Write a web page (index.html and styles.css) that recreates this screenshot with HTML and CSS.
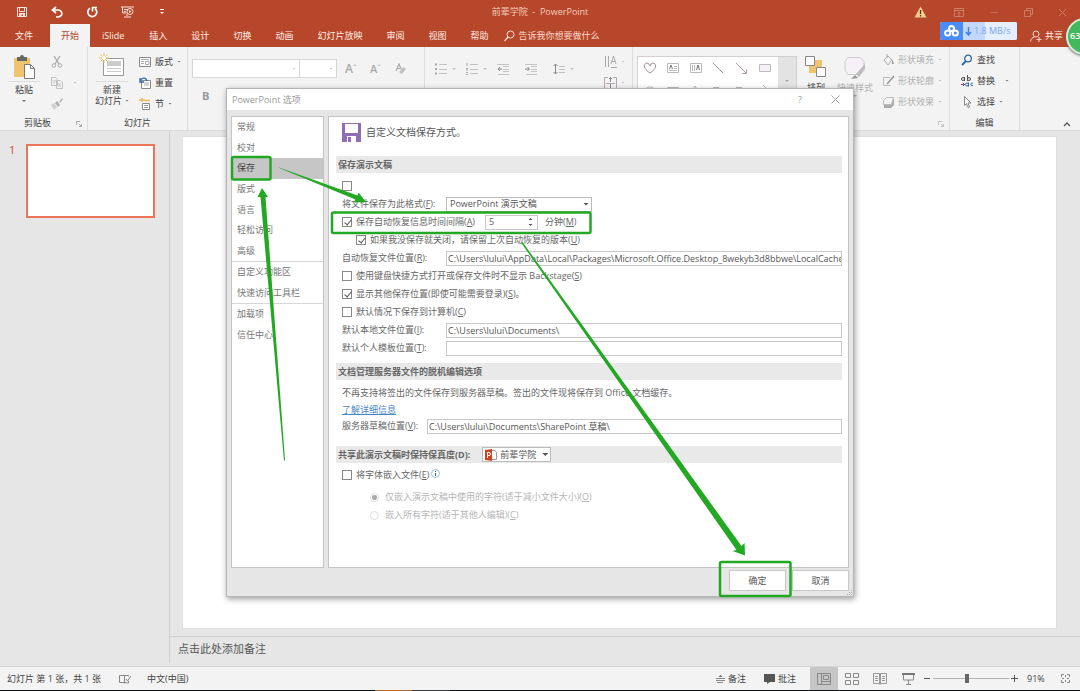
FILE: index.html
```html
<!DOCTYPE html>
<html lang="zh-CN">
<head>
<meta charset="utf-8">
<title>前辈学院 - PowerPoint</title>
<link rel="stylesheet" href="styles.css">
</head>
<body>
<div class="app">
  <header class="titlebar">
    <div class="quick">
      <button class="tool" aria-label="保存"><svg width="12" height="12" viewBox="0 0 12 12"><path d="M1.500 1.500h9v9h-9z M3.500 1.500v4h5v-4" fill="none" stroke="#fbe3da"/><path d="M3 7h6v4H7V8.500H5.500V11H3z" fill="#fbe3da"/></svg></button>
      <button class="tool" aria-label="撤消"><svg width="12" height="12" viewBox="0 0 12 12"><path d="M5 1L1.500 4L5 7 M2 4h5a3.300 3 0 0 1 0 7H5" fill="none" stroke="#fff" stroke-width="1.700"/></svg></button>
      <button class="tool" aria-label="重复"><svg width="12" height="12" viewBox="0 0 12 12"><path d="M9 2.500A4.500 4.500 0 1 1 4 2.200 M6.500 5.500V1.500H11" fill="none" stroke="#fff" stroke-width="1.700"/></svg></button>
      <button class="tool" aria-label="从头开始放映"><svg width="13" height="12" viewBox="0 0 13 12"><path d="M0 1h13 M1.500 1v6h4 M3 3.500h4 M3 5.500h2 M6 8v2 M3 11h7" fill="none" stroke="#fbe3da"/><circle cx="9" cy="5.500" r="3" fill="none" stroke="#fbe3da"/><path d="M8 4l2.500 1.500L8 7z" fill="#fbe3da"/></svg></button>
      <button class="tool" aria-label="自定义快速访问工具栏"><svg width="6" height="6" viewBox="0 0 6 6"><path d="M1 .5h4" stroke="#fff"/><path d="M1 3h4L3 5z" fill="#fff"/></svg></button>
    </div>
    <h1 class="doc-title">前辈学院 &nbsp;- &nbsp;PowerPoint</h1>
    <div class="window-tools">
      <svg width="13" height="12" viewBox="0 0 13 12"><path d="M6.500 0.500L12.500 11.500H.5z" fill="#f3cf92"/><path d="M6.500 4v4M6.500 9v1.500" stroke="#5b3418" stroke-width="1.300"/></svg>
      <button class="tool" aria-label="功能区显示选项"><svg width="10" height="9" viewBox="0 0 10 9"><path d="M.5.500h9v8h-9z M.5 2.500h9 M5 8V4 M3.500 5.500L5 4l1.500 1.500" fill="none" stroke="#cf7c66"/></svg></button>
      <button class="tool" aria-label="最小化"><svg width="10" height="9" viewBox="0 0 10 9"><path d="M1 4.500h8" stroke="#c96b52"/></svg></button>
      <button class="tool" aria-label="还原"><svg width="9" height="9" viewBox="0 0 9 9"><path d="M.5 2.500h6v6h-6z M2.500 2.500v-2h6v6h-2" fill="none" stroke="#cf7c66"/></svg></button>
      <button class="tool" aria-label="关闭"><svg width="9" height="9" viewBox="0 0 9 9"><path d="M1 1l7 7M8 1L1 8" stroke="#cf7c66"/></svg></button>
    </div>
  </header>

  <nav class="tabs">
    <a class="tab compact file" href="#">文件</a>
    <a class="tab compact active" href="#">开始</a>
    <a class="tab compact addin" href="#">iSlide</a>
    <a class="tab" href="#">插入</a>
    <a class="tab" href="#">设计</a>
    <a class="tab" href="#">切换</a>
    <a class="tab" href="#">动画</a>
    <a class="tab" href="#">幻灯片放映</a>
    <a class="tab" href="#">审阅</a>
    <a class="tab" href="#">视图</a>
    <a class="tab" href="#">帮助</a>
    <button class="tell-me"><svg width="11" height="12" viewBox="0 0 11 12"><circle cx="6.500" cy="4.500" r="3.500" fill="none" stroke="#fbe3da"/><path d="M4 7L.5 11" stroke="#fbe3da" stroke-width="1.200"/></svg>告诉我你想要做什么</button>
    <button class="share"><svg width="12" height="12" viewBox="0 0 12 12"><circle cx="6" cy="4" r="3" fill="none" stroke="#f6d5ca"/><path d="M.5 11.500c.5-3 2-4 4-4.500M9 7v5M6.500 9.500h5" fill="none" stroke="#f6d5ca"/></svg>共享</button>
  </nav>

  <div class="ribbon">
    <section class="group clipboard">
      <div class="group-body">
        <button class="big"><svg width="22" height="24" viewBox="0 0 22 24"><path d="M1 3h16v19H1z" fill="#efc36f"/><path d="M4 2h3a2 2 0 0 1 4 0h3v4H4z" fill="#666"/><path d="M11.500 9.500h6l4 4v10h-10z" fill="#fff" stroke="#777"/><path d="M17.500 9.500v4h4" fill="none" stroke="#777"/></svg><span class="rule"></span><span>粘贴</span><i class="caret below"></i></button>
        <div class="stack">
          <button class="row dim" aria-label="剪切"><svg width="12" height="12" viewBox="0 0 12 12"><path d="M3 0l5 8M9 0L4 8" stroke="#aaa" stroke-width="1.300"/><circle cx="3" cy="9.500" r="1.800" fill="none" stroke="#aaa"/><circle cx="9" cy="9.500" r="1.800" fill="none" stroke="#aaa"/></svg></button>
          <button class="row dim" aria-label="复制"><svg width="12" height="12" viewBox="0 0 12 12"><path d="M.5.500h4l2 2v6h-6z M5.500 3.500h4l2 2v6h-6z" fill="#f3f3f3" stroke="#c0c0c0"/><path d="M2 4h3M2 6h2M7 7h3M7 9h3" stroke="#c0c0c0"/></svg><i class="caret far"></i></button>
          <button class="row dim" aria-label="格式刷"><svg width="12" height="12" viewBox="0 0 12 12"><path d="M0 7l3-2 3 4-3 3z" fill="#cfcfcf"/><path d="M4 5l2-2 3 4-2 2z M8 4l3-4 1 1-3 4z" fill="#b0b0b0"/></svg></button>
        </div>
      </div>
      <h2 class="group-name">剪贴板</h2><svg class="launcher" width="6" height="6" viewBox="0 0 6 6"><path d="M.5 4V.5H4M3 3l2.500 2.500M5.500 3v2.500H3" fill="none" stroke="#aaa"/></svg>
    </section>
    <section class="group slides">
      <div class="group-body">
        <button class="big"><svg class="new-slide" width="26" height="24" viewBox="0 0 26 24"><path d="M4.500 5.500h20v17h-20z" fill="#fff" stroke="#999"/><path d="M8 8h14v5H8z" fill="#ccc"/><path d="M8 15.500h14M8 18.500h14" stroke="#ccc"/><path d="M5 0v10M0 5h10M1.500 1.500l7 7M8.500 1.500l-7 7" stroke="#efb85c"/><circle cx="5" cy="5" r="2" fill="#fff"/></svg><span class="rule"></span><span>新建</span><span class="with-caret">幻灯片<i class="caret"></i></span></button>
        <div class="stack">
          <button class="row"><svg width="12" height="12" viewBox="0 0 12 12"><path d="M.5 1.500h11v9H.5z" fill="#fff" stroke="#888"/><path d="M2 3.500h8M2 5.500h3M2 7.500h3M6.500 5.500H10v3H6.500z" fill="none" stroke="#aaa"/></svg>版式<i class="caret"></i></button>
          <button class="row"><svg width="12" height="12" viewBox="0 0 12 12"><path d="M2.500 3.500h9v8h-9z" fill="#fff" stroke="#888"/><path d="M5 6h5M5 8h5" stroke="#aaa"/><path d="M1 1v4h4M1 5c1-5 6-5 7-1" fill="none" stroke="#2b6cb0" stroke-width="1.300"/></svg>重置</button>
          <button class="row"><svg width="12" height="12" viewBox="0 0 12 12"><path d="M0 2h6M3 0v4M6 2.500h5" stroke="#efb85c" stroke-width="1.500"/><path d="M3.500 5.500h7v6h-7z" fill="#fff" stroke="#888"/><path d="M5 7.500h4M5 9.500h4" stroke="#999"/></svg>节<i class="caret"></i></button>
        </div>
      </div>
      <h2 class="group-name">幻灯片</h2>
    </section>
    <section class="group font">
      <div class="font-row">
        <div class="combo-pair"><span class="combo wide"><i class="caret"></i></span><span class="combo"><i class="caret"></i></span></div>
        <button class="glyph" aria-label="增大字号"><b>A</b><sup>ˆ</sup></button>
        <button class="glyph small" aria-label="减小字号"><b>A</b><sup>ˇ</sup></button>
        <button class="glyph" aria-label="清除格式"><svg width="12" height="12" viewBox="0 0 12 12"><path d="M1 8l3-7 2 5M2 5.500h3" fill="none" stroke="#aaa" stroke-width="1.200"/><path d="M4 9l4-5 3 2-4 5z" fill="#c0c0c0"/></svg></button>
      </div>
      <button class="bold">B</button>
    </section>
    <section class="group paragraph">
      <div class="para-row">
        <button class="tool" aria-label="项目符号"><svg width="12" height="12" viewBox="0 0 12 12"><path d="M0 1.500h2M0 6h2M0 10.500h2" stroke="#aaa" stroke-width="2"/><path d="M4 1.500h8M4 6.500h8M4 10.500h8" stroke="#c0c0c0"/></svg><i class="caret"></i></button>
        <button class="tool" aria-label="编号"><svg width="12" height="12" viewBox="0 0 12 12"><path d="M1 0v3M0 5.500h2M0 7h2M0 9.500h2M0 11.500h2" stroke="#aaa"/><path d="M4 1.500h8M4 6.500h8M4 10.500h8" stroke="#c0c0c0"/></svg><i class="caret"></i></button>
        <button class="tool" aria-label="减少缩进"><svg width="12" height="12" viewBox="0 0 12 12"><path d="M0 1.500h12M6 3.500h6M6 6.500h6M6 8.500h6M1 11.500h11" stroke="#c4c4c4"/><path d="M5 6H1M3 4L1 6l2 2" fill="none" stroke="#888"/></svg></button>
        <button class="tool" aria-label="增加缩进"><svg width="12" height="12" viewBox="0 0 12 12"><path d="M0 1.500h12M6 3.500h6M6 6.500h6M6 8.500h6M1 11.500h11" stroke="#c4c4c4"/><path d="M0 6h4M2.500 4l2 2-2 2" fill="none" stroke="#888"/></svg></button>
        <button class="tool spacing" aria-label="行距"><svg width="12" height="12" viewBox="0 0 12 12"><path d="M2.500 1v10M.5 3l2-2 2 2M.5 9l2 2 2-2" fill="none" stroke="#888"/><path d="M6 3.500h6M6 6.500h6M6 9.500h6" stroke="#c0c0c0"/></svg><i class="caret"></i></button>
      </div>
      <div class="stack direction">
        <button class="row dim" aria-label="文字方向"><svg width="13" height="12" viewBox="0 0 13 12"><path d="M1.500 0v11M4.500 0v11M7 11.500h6" stroke="#aaa"/><path d="M7 8l2.500-8L12 8M8 5.500h3" fill="none" stroke="#aaa"/></svg><i class="caret"></i></button>
        <button class="row dim" aria-label="对齐文本"><svg width="13" height="12" viewBox="0 0 13 12"><path d="M4 .5H.5v11H4M9 .5h3.500v11H9M2 6.500h9" fill="none" stroke="#b5a5b5"/><path d="M6.500 0v5M5 2l1.500-1.500L8 2M6.500 7v5" fill="none" stroke="#888"/></svg><i class="caret"></i></button>
      </div>
    </section>
    <section class="group drawing">
      <div class="gallery">
        <svg width="140" height="40" viewBox="0 0 140 40" fill="none" stroke="#bbb"><path d="M12 16C4 11 6 6 9 6q2 0 3 3q1-3 3-3c3 0 5 5-3 10z" stroke="#a58f9a"/><path d="M29.500 6.500h11v9h-11z M31 13.500h8M36 9.500h3M36 11.500h3M52.500 6.500h11v9h-11z M54.500 8v6M56.500 8v6"/><path d="M31.500 12l1.500-4 1.500 4M58.500 13l1.500-5 1.500 5" stroke="#777"/><path d="M75 6l10 10M98 6l10 10" stroke="#a996a5"/><path d="M108.500 12.500v4h-4" stroke="#a996a5"/><path d="M121.500 7.500h11v7h-11z" fill="#f6f0f7"/><ellipse cx="12" cy="34" rx="5" ry="4"/><path d="M29.500 30.500h11v6h-11z M57 29l5 8H52z M75 30.500h6v6M98 30.500h6v6M125 28l6 6"/></svg>
        <div class="gallery-bar"><i class="caret"></i></div>
      </div>
      <button class="big arrange"><svg width="22" height="22" viewBox="0 0 22 22"><path d="M9 4h8v8H9zM4 10h8v7H4z" fill="#efc36f"/><path d="M.5.500h9v9h-9zM11.500 11.500h9v9h-9z" fill="#fff" stroke="#888"/></svg><span>排列</span></button>
      <button class="big styles dim"><svg width="24" height="24" viewBox="0 0 24 24"><path d="M5 1.500h12l4 4v9l-4 4H5l-3-4v-9z" fill="#f6f0f7" stroke="#ccc"/><path d="M22 8l-9 10 3 3 6-9z" fill="#bbb"/><path d="M12 19l3 3-7 1z" fill="#999"/></svg><span>快速样式</span><i class="caret"></i></button>
      <div class="stack shape-tools">
        <button class="row dim"><svg width="11" height="12" viewBox="0 0 11 12"><path d="M1 6l4-4 4 4-4 5z M4 4V0" fill="none" stroke="#aaa"/><path d="M9 5l2 5H9z" fill="#999"/></svg>形状填充<i class="caret"></i></button>
        <button class="row dim"><svg width="11" height="12" viewBox="0 0 11 12"><path d="M7 2.500H.5v8h7" fill="none" stroke="#bbb"/><path d="M4 9l7-8" stroke="#999" stroke-width="1.500"/></svg>形状轮廓<i class="caret"></i></button>
        <button class="row dim"><svg width="11" height="12" viewBox="0 0 11 12"><path d="M4 3h7v6l-3 3H1V7z" fill="#aaa"/><path d="M3.500 1.500h7l-2 7h-8v-4z" fill="#f3f3f3" stroke="#bbb"/></svg>形状效果<i class="caret"></i></button>
      </div>
      <svg class="launcher" width="6" height="6" viewBox="0 0 6 6"><path d="M.5 4V.5H4M3 3l2.500 2.500M5.500 3v2.500H3" fill="none" stroke="#c4c4c4"/></svg>
    </section>
    <section class="group editing">
      <div class="stack">
        <button class="row"><svg width="12" height="12" viewBox="0 0 12 12"><circle cx="7" cy="4.500" r="3.300" fill="none" stroke="#2d66a5" stroke-width="1.300"/><path d="M5 7L1 11" stroke="#2d66a5" stroke-width="1.800"/></svg>查找</button>
        <button class="row"><svg width="12" height="12" viewBox="0 0 12 12" fill="none"><ellipse cx="2" cy="4" rx="1.500" ry="1.500" stroke="#555"/><path d="M3.500 2v4M6.500 0v6" stroke="#555"/><circle cx="8" cy="4" r="1.500" stroke="#555"/><ellipse cx="6" cy="9.500" rx="1.500" ry="1.500" stroke="#2d66a5"/><path d="M7.500 7.500v4M12 8.500c-3-1.500-3 3 0 2" stroke="#2d66a5"/><path d="M0 9.500h4M2.500 8v3" stroke="#7c4a91"/></svg>替换<i class="caret far"></i></button>
        <button class="row"><svg width="12" height="12" viewBox="0 0 12 12"><path d="M3.500.500v9l2-2 1.500 4 1.500-.5L7 7h3z" fill="#fff" stroke="#888"/></svg>选择<i class="caret"></i></button>
      </div>
      <h2 class="group-name">编辑</h2>
    </section>
    <button class="collapse" aria-label="折叠功能区"><svg width="8" height="6" viewBox="0 0 8 6"><path d="M1 5l3-3 3 3" fill="none" stroke="#555" stroke-width="1.300"/></svg></button>
  </div>

  <main class="workspace">
    <aside class="thumbs"><span class="number">1</span><div class="thumb"></div></aside>
    <div class="editor">
      <div class="slide"></div>
      <p class="notes">点击此处添加备注</p>
    </div>
  </main>

  <footer class="status">
    <span>幻灯片 第 1 张，共 1 张</span>
    <svg class="proof" width="12" height="10" viewBox="0 0 12 10"><path d="M5.500 1.500v8M5.500 1.500H.5v7h5l4 .5V7M5.500 1.500h4v1M7 5l1.500 2L12 2" fill="none" stroke="#888"/></svg>
    <span>中文(中国)</span>
    <div class="status-right">
      <button class="label-btn"><svg width="9" height="9" viewBox="0 0 9 9"><path d="M0 4.500h9M0 6.500h9M1 8.500h6" stroke="#888"/><path d="M2.500 3l2-2 2 2z" fill="#666"/></svg>备注</button>
      <button class="label-btn"><svg width="11" height="10" viewBox="0 0 11 10"><path d="M0 0h11v8H6l-3 2V8H0z" fill="#555"/></svg>批注</button>
      <div class="views">
        <button class="view on" aria-label="普通视图"><svg width="14" height="12" viewBox="0 0 14 12"><path d="M.5.500h13v11H.5zM4.500.5v11M6.500 2.500h5v4h-5zM4.500 8.500h9" fill="none" stroke="#888"/></svg></button>
        <button class="view" aria-label="幻灯片浏览"><svg width="14" height="12" viewBox="0 0 14 12"><path d="M.5.500h5v4h-5zM8.500.5h5v4h-5zM.5 7.500h5v4h-5zM8.500 7.500h5v4h-5z" fill="none" stroke="#888"/></svg></button>
        <button class="view" aria-label="阅读视图"><svg width="14" height="12" viewBox="0 0 14 12"><path d="M.5.500h6v10h-6zM7.500.5h6v10h-6zM7 0v12M2 3.500h3M2 5.500h3M2 7.500h3M9 3.500h3M9 5.500h3M9 7.500h3" fill="none" stroke="#999"/></svg></button>
        <button class="view" aria-label="幻灯片放映"><svg width="13" height="12" viewBox="0 0 13 12"><path d="M0 1h13" stroke="#777" stroke-width="2"/><path d="M1.500 2v5h10V2M6.500 7v4M4 11.500h5" fill="none" stroke="#888"/></svg></button>
      </div>
      <div class="zoom"><button class="tool" aria-label="缩小"><svg width="7" height="7" viewBox="0 0 7 7"><path d="M0 3.500h6" stroke="#555"/></svg></button><input type="range" min="0" max="100" value="44" aria-label="缩放"><button class="tool" aria-label="放大"><svg width="7" height="7" viewBox="0 0 7 7"><path d="M0 3.500h7M3.500 0v7" stroke="#555"/></svg></button></div>
      <span class="percent">91%</span>
      <button class="tool fit" aria-label="适应窗口"><svg width="9" height="9" viewBox="0 0 9 9"><path d="M.5 3V.5H3M6 .5h2.500V3M8.500 6v2.500H6M3 8.500H.5V6M4.500 1v2M4.500 6v2M1 4.500h2M6 4.500h2" fill="none" stroke="#888"/></svg></button>
    </div>
  </footer>
  <div class="taskbar"></div>

  <div class="speed"><span class="cloud"><svg width="15" height="12" viewBox="0 0 15 12" fill="none" stroke="#fff" stroke-width="2"><circle cx="7.500" cy="3.500" r="2.500"/><circle cx="3.700" cy="8" r="2.600"/><circle cx="11.300" cy="8" r="2.600"/></svg></span><span class="rate"><svg width="7" height="9" viewBox="0 0 7 9"><path d="M3.500 0v7M1 5l2.500 3L6 5" fill="none" stroke="#3e82f0" stroke-width="1.500"/></svg>1.8 MB/s</span></div>
  <div class="ball-clip"><div class="ball">63</div></div>

  <div class="layer">
    <section class="dialog" role="dialog" aria-labelledby="dlg-title">
      <header class="dialog-head"><h2 id="dlg-title">PowerPoint 选项</h2><button class="tool help" aria-label="帮助">?</button><button class="tool" aria-label="关闭"><svg width="9" height="9" viewBox="0 0 9 9"><path d="M.5.500l8 8M8.500.5l-8 8" stroke="#aaa"/></svg></button></header>
      <div class="dialog-body">
        <nav class="side">
          <div class="side-main"><a href="#">常规</a><a href="#">校对</a><a class="on" href="#">保存</a><a href="#">版式</a><a href="#">语言</a><a href="#">轻松访问</a><a href="#">高级</a></div>
          <div class="side-pair"><a href="#">自定义功能区</a><a href="#">快速访问工具栏</a></div>
          <div class="side-pair"><a href="#">加载项</a><a href="#">信任中心</a></div>
        </nav>
        <form class="panel">
          <div class="intro"><svg width="19" height="19" viewBox="0 0 19 19"><path d="M0 0h19v19H0z" fill="#8f6fb3"/><path d="M3 1h13v9H3zM5 13h9v6H5z" fill="#fff"/><path d="M6 14h3v5H6z" fill="#8f6fb3"/></svg><span>自定义文档保存方式。</span></div>
          <h3>保存演示文稿</h3>
          <div class="fields first">
            <div class="line"><input type="checkbox" aria-label="选项"></div>
            <div class="line"><label class="lab" for="fmt">将文件保存为此格式(<u>F</u>):</label><span class="pick fmt"><select id="fmt"><option>PowerPoint 演示文稿</option></select></span></div>
            <div class="line"><input type="checkbox" id="auto" checked><label for="auto">保存自动恢复信息时间间隔(<u>A</u>)</label><span class="spin"><input type="text" id="mins" value="5"><svg width="5" height="12" viewBox="0 0 5 12"><path d="M0.500 4l2-2 2 2zM0.500 8l2 2 2-2z" fill="#555"/></svg></span><label for="mins">分钟(<u>M</u>)</label></div>
            <div class="line sub"><input type="checkbox" id="keep" checked><label for="keep">如果我没保存就关闭，请保留上次自动恢复的版本(<u>U</u>)</label></div>
            <div class="line"><label class="lab" for="rec">自动恢复文件位置(<u>R</u>):</label><input class="text" type="text" id="rec" value="C:\Users\lului\AppData\Local\Packages\Microsoft.Office.Desktop_8wekyb3d8bbwe\LocalCache\Roaming"></div>
            <div class="line"><input type="checkbox" id="back"><label for="back">使用键盘快捷方式打开或保存文件时不显示 Backstage(<u>S</u>)</label></div>
            <div class="line"><input type="checkbox" id="other" checked><label for="other">显示其他保存位置(即使可能需要登录)(<u>S</u>)。</label></div>
            <div class="line"><input type="checkbox" id="pc"><label for="pc">默认情况下保存到计算机(<u>C</u>)</label></div>
            <div class="line"><label class="lab" for="loc">默认本地文件位置(<u>I</u>):</label><input class="text" type="text" id="loc" value="C:\Users\lului\Documents\"></div>
            <div class="line"><label class="lab" for="tpl">默认个人模板位置(<u>T</u>):</label><input class="text" type="text" id="tpl" value=""></div>
          </div>
          <h3>文档管理服务器文件的脱机编辑选项</h3>
          <div class="fields first">
            <p class="line">不再支持将签出的文件保存到服务器草稿。签出的文件现将保存到 Office 文档缓存。</p>
            <p class="line link"><a href="#">了解详细信息</a></p>
            <div class="line"><label class="lab short" for="srv">服务器草稿位置(<u>V</u>):</label><input class="text" type="text" id="srv" value="C:\Users\lului\Documents\SharePoint 草稿\"></div>
          </div>
          <h3 class="share-head"><label for="deck">共享此演示文稿时保持保真度(D):</label><span class="pick deck"><svg width="12" height="12" viewBox="0 0 12 12"><path d="M6 1.500h4l1.500 2v7H6z" fill="#fff" stroke="#999"/><path d="M0 1l7-1v12l-7-1z" fill="#d04423"/><path d="M2.500 9V3.500h1.500a1.500 1.500 0 0 1 0 3H2.500" fill="none" stroke="#fff"/></svg><select id="deck"><option>前辈学院</option></select></span></h3>
          <div class="fields">
            <div class="line"><input type="checkbox" id="embed"><label for="embed">将字体嵌入文件(<u>E</u>)</label><svg class="info" width="9" height="9" viewBox="0 0 9 9"><circle cx="4.500" cy="4.500" r="4" fill="#fff" stroke="#9dbfe2"/><path d="M4.500 2v1M4.500 4v3" stroke="#2d66a5"/></svg></div>
            <div class="radios">
              <div class="line"><input type="radio" name="em" id="r1" checked disabled><label for="r1">仅嵌入演示文稿中使用的字符(适于减小文件大小)(<u>O</u>)</label></div>
              <div class="line"><input type="radio" name="em" id="r2" disabled><label for="r2">嵌入所有字符(适于其他人编辑)(<u>C</u>)</label></div>
            </div>
          </div>
        </form>
      </div>
      <footer class="dialog-foot"><button class="btn">确定</button><button class="btn">取消</button></footer>
      <svg class="grip" width="6" height="6" viewBox="0 0 6 6"><path d="M4 0h1v1H4zM4 2h1v1H4zM4 4h1v1H4zM2 2h1v1H2zM2 4h1v1H2zM0 4h1v1H0z" fill="#aaa"/></svg>
      <svg class="marks" width="628" height="510" viewBox="0 0 628 510">
        <g fill="none" stroke="#22a822" stroke-width="2.500"><rect x="6" y="69" width="38.500" height="22.500" rx="1.500"/><rect x="106" y="124.500" width="258.500" height="20.500" rx="1.500"/><rect x="494" y="474" width="70.500" height="34" rx="1.500"/></g>
        <g fill="#22a822"><path d="M52 79.500L129.500 111.500L128 114.500L140 114L132.500 104.500L131.500 107.500L53 79.500z"/><path d="M58 373L34.500 109L31.500 109L36 100L42 109L39.500 109L59 372z"/><path d="M295 154.500L510.500 462L506.500 463L519 467.500L518.500 455L515.500 458L296.500 154z"/></g>
      </svg>
    </section>
  </div>
</div>
</body>
</html>
```
FILE: styles.css
```css
* { box-sizing: border-box; }
body { margin: 0; background: #e6e6e6; color: #444; font: 9px/12px "Open Sans", "Noto Sans CJK SC", sans-serif; }
h1, h2, h3, p { margin: 0; font-size: inherit; font-weight: 400; }
button, input, select { font: inherit; color: inherit; margin: 0; }
button { border: 0; padding: 0; background: none; display: flex; align-items: center; white-space: nowrap; }
a { color: inherit; text-decoration: none; }
svg { display: block; flex: none; }
.app { position: relative; min-height: 100vh; display: flex; flex-direction: column; overflow: hidden; }
.tool { justify-content: center; }
.caret { flex: none; display: inline-block; width: 4px; height: 2px; background: #777; clip-path: polygon(0 0, 100% 0, 50% 100%); }

.titlebar { height: 24px; display: grid; grid-template-columns: 1fr auto 1fr; align-items: center; background: #b7472a; }
.quick { display: flex; align-items: center; gap: 23px; padding-left: 16px; }
.quick .tool:last-child { margin-left: 2px; }
.doc-title { color: #f4cdbf; }
.window-tools { display: flex; justify-content: flex-end; align-items: center; gap: 25px; padding-right: 13px; }
.window-tools > svg { margin-right: 2px; }

.tabs { height: 23px; display: flex; background: #b7472a; color: #fdeee8; }
.tab { display: flex; align-items: center; padding: 0 12px; white-space: nowrap; }
.tab.compact { padding: 0 11px; }
.tab.file { padding: 0 17px 0 15px; }
.tab.addin { padding: 0 13px 0 12px; }
.tab.active { background: #f3f3f3; color: #b7472a; }
.tell-me { margin-left: 4px; gap: 3px; color: #f8d9ce; }
.share { margin-left: auto; margin-right: 17px; gap: 3px; }

.ribbon { display: flex; height: 84px; background: #f3f3f3; border-bottom: 1px solid #dadada; }
.group { position: relative; display: flex; flex-direction: column; border-right: 1px solid #dcdcdc; }
.group-body { display: flex; flex: 1; }
.group-name { margin-top: auto; height: 13px; text-align: center; }
.launcher { position: absolute; right: 5px; bottom: 3px; }
.big { flex-direction: column; padding-top: 8px; height: 62px; line-height: 11px; }
.big .rule { width: 32px; height: 1px; margin: 2px 0; background: #ddd; }
.big .below { margin-top: 5px; }
.with-caret { display: flex; align-items: center; gap: 3px; }
.stack { display: flex; flex-direction: column; padding-top: 4px; }
.row { height: 21px; gap: 4px; }
.dim { color: #b0b0b0; }
.dim .caret { background: #bbb; }
.far { margin-left: 6px; }
.clipboard { width: 88px; }
.clipboard .big { width: 48px; }
.clipboard .stack { padding-left: 3px; }
.clipboard .group-name { padding-right: 12px; }
.slides { width: 100px; }
.slides .big { width: 48px; padding-top: 6px; }
.slides .stack { padding-left: 3px; }
.new-slide { margin-bottom: 2px; }
.font { width: 237px; padding: 12px 4px; }
.font-row { display: flex; align-items: center; }
.combo-pair { display: flex; margin-right: 8px; }
.combo { display: flex; align-items: center; justify-content: flex-end; width: 37px; height: 19px; padding-right: 3px; background: #fff; border: 1px solid #d6d6d6; border-left: 0; }
.combo.wide { width: 108px; border-left: 1px solid #d6d6d6; }
.glyph { width: 28px; color: #aaa; font-size: 12px; }
.glyph.small { font-size: 11px; }
.glyph b { font-weight: 600; }
.glyph sup { font-size: 9px; line-height: 6px; }
.bold { margin: 12px 10px; font-size: 11px; font-weight: 700; color: #999; }
.paragraph { width: 208px; padding-left: 10px; flex-direction: row; justify-content: space-between; }
.para-row { display: flex; gap: 16px; padding-top: 16px; height: 28px; }
.para-row .tool { gap: 5px; }
.para-row .tool:nth-child(1), .para-row .tool:nth-child(2) { margin-right: -6px; }
.paragraph .caret, .font .caret { background: #c4c4c4; }
.direction { padding-right: 7px; }
.drawing { width: 317px; flex-direction: row; padding-left: 4px; }
.gallery { display: flex; width: 160px; height: 64px; margin-top: 9px; background: #fff; border: 1px solid #d0d0d0; overflow: hidden; }
.gallery-bar { display: flex; justify-content: center; width: 20px; padding-top: 23px; background: #e3e3e3; }
.gallery-bar .caret { background: #aaa; }
.arrange { width: 38px; gap: 4px; padding-top: 9px; }
.styles { width: 40px; gap: 2px; padding-top: 9px; }
.shape-tools { padding: 2px 0 0 8px; }
.editing { width: 70px; }
.editing .stack { padding: 2px 0 0 11px; }
.collapse { margin: auto 9px 3px auto; }

.workspace { flex: 1; display: flex; }
.thumbs { width: 170px; margin-bottom: 3px; padding: 13px 0 0 9px; display: flex; gap: 10px; border-right: 1px solid #cfcfcf; }
.number { width: 7px; color: #d8473d; font-size: 11px; }
.thumb { width: 129px; height: 74px; background: #fff; border: 2px solid #ec7459; }
.editor { flex: 1; display: flex; flex-direction: column; }
.slide { flex: 1; margin: 5px 23px 7px 12px; background: #fff; border: 1px solid #e0e0e0; }
.notes { height: 30px; padding: 5px 8px; border-top: 1px solid #cfcfcf; color: #555; font-size: 11px; line-height: 14px; }

.status { display: flex; align-items: center; height: 24px; padding: 0 10px 0 7px; background: #f3f3f3; border-top: 1px solid #d4d4d4; }
.taskbar { height: 1px; background: linear-gradient(90deg, #101018 375px, #b8692c 375px, #b8692c 412px, #3a3a42 412px, #3a3a42 450px, #101018 450px); }
.proof { margin: 0 16px 0 18px; }
.status-right { display: flex; align-items: center; align-self: stretch; margin-left: auto; }
.label-btn { gap: 3px; margin-right: 18px; }
.label-btn + .label-btn { margin-right: 14px; }
.views { display: flex; align-self: stretch; }
.view { width: 28px; justify-content: center; }
.view.on { background: #c6c6c6; }
.zoom { display: flex; align-items: center; gap: 2px; margin-left: 2px; }
.zoom input { appearance: none; width: 76px; height: 10px; background: linear-gradient(#b5b5b5, #b5b5b5) center / 100% 1px no-repeat; }
.zoom input::-webkit-slider-thumb { appearance: none; width: 4px; height: 9px; background: #666; }
.percent { width: 22px; margin: 0 12px 0 9px; }

.speed { position: absolute; top: 22px; right: 63px; display: flex; width: 77px; height: 18px; border-radius: 2px; overflow: hidden; background: #e6efff; }
.cloud { display: flex; align-items: center; justify-content: center; width: 23px; background: #4a8df8; }
.rate { display: flex; flex: 1; align-items: center; gap: 2px; padding-left: 2px; color: #78a5f0; white-space: nowrap; background: linear-gradient(90deg, #c3d8fc 40%, #e6efff 40%); }
.ball-clip { position: absolute; top: 12px; right: 0; width: 16px; height: 52px; overflow: hidden; }
.ball { width: 37px; height: 37px; margin: 6px 0 0 2px; padding: 10px 2px; border: 2px solid #dcebdc; border-radius: 50%; background: #42b95c; box-shadow: 0 1px 3px #666; color: #fff; font-weight: 600; }

.layer { position: absolute; top: 88px; left: 0; right: 0; display: flex; justify-content: center; }
.dialog { position: relative; display: flex; flex-direction: column; width: 628px; background: #e6e6e6; border: 1px solid #b5b5b5; box-shadow: 1px 2px 6px #0006; color: #666; }
.dialog-head { display: flex; align-items: center; gap: 29px; height: 21px; padding: 0 13px 0 5px; background: #fff; color: #999; }
.dialog-head h2 { flex: 1; }
.dialog-body { display: flex; gap: 4px; height: 458px; padding: 6px 4px 0; }
.side { width: 93px; background: #fff; border: 1px solid #c4c4c4; color: #777; }
.side > div { display: flex; flex-direction: column; }
.side a { flex: 1; display: flex; align-items: center; padding-left: 5px; }
.side .on { background: #c6c6c6; color: #444; }
.side-main { height: 144px; }
.side-pair { height: 42px; border-top: 1px solid #d6d6d6; }
.panel { flex: 1; min-width: 0; padding: 5px 6px 0 7px; background: #fff; border: 1px solid #c4c4c4; }
.intro { display: flex; align-items: center; gap: 5px; height: 20px; margin: 0 0 14px 6px; font-size: 10px; color: #555; }
.panel h3 { display: flex; align-items: center; height: 17px; padding-left: 2px; background: #e9e9e9; font-weight: 700; color: #666; }
.fields { padding: 3px 0 7px 6px; }
.fields.first { padding: 4px 0 6px 6px; }
.line { display: flex; align-items: center; height: 18px; white-space: nowrap; }
.line.link { height: 15px; }
.link a { color: #4a86c5; text-decoration: underline; }
.sub { padding-left: 14px; }
.lab { flex: none; width: 104px; }
.lab.short { width: 85px; }
input[type=checkbox] { appearance: none; flex: none; width: 10px; height: 10px; margin-right: 4px; border: 1px solid #888; background: #fff; }
input[type=checkbox]:checked::after { content: ""; display: block; width: 3px; height: 6px; margin: 0 0 0 3px; border: solid #555; border-width: 0 1px 1px 0; transform: rotate(40deg); }
input[type=radio] { appearance: none; width: 9px; height: 9px; margin-right: 6px; border: 1px solid #ddd; border-radius: 50%; }
input[type=radio]:checked { background: radial-gradient(#aaa 2px, #fff 3px); }
.text { flex: 1; min-width: 0; height: 15px; padding: 0 0 0 1px; border: 1px solid #c8c8c8; color: #555; }
.pick { position: relative; display: flex; align-items: center; height: 15px; background: #fff; border: 1px solid #bbb; color: #555; }
.pick::after { content: ""; position: absolute; right: 2px; width: 6px; height: 3px; background: #555; clip-path: polygon(0 0, 100% 0, 50% 100%); pointer-events: none; }
.pick select { appearance: none; flex: 1; border: 0; padding: 0 3px; background: none; outline: 0; }
.fmt { width: 146px; }
.deck { width: 69px; margin-left: 12px; padding-left: 2px; font-weight: 400; }
.spin { display: flex; align-items: center; width: 53px; height: 15px; margin: 0 7px 0 10px; padding-right: 4px; border: 1px solid #c8c8c8; }
.spin input { flex: 1; min-width: 0; padding: 0 3px; border: 0; background: none; }
.share-head { margin-top: 5px; }
.info { margin: 0 0 3px 2px; }
.radios { padding: 4px 0 0 28px; color: #b5b5b5; }
.dialog-foot { display: flex; justify-content: flex-end; gap: 6px; height: 28px; padding: 2px 4px 5px; }
.btn { width: 57px; height: 21px; justify-content: center; background: #fff; border: 1px solid #c8c8c8; color: #555; }
.grip { position: absolute; right: 0; bottom: 0; }
.marks { position: absolute; top: -1px; left: -1px; pointer-events: none; }
```
